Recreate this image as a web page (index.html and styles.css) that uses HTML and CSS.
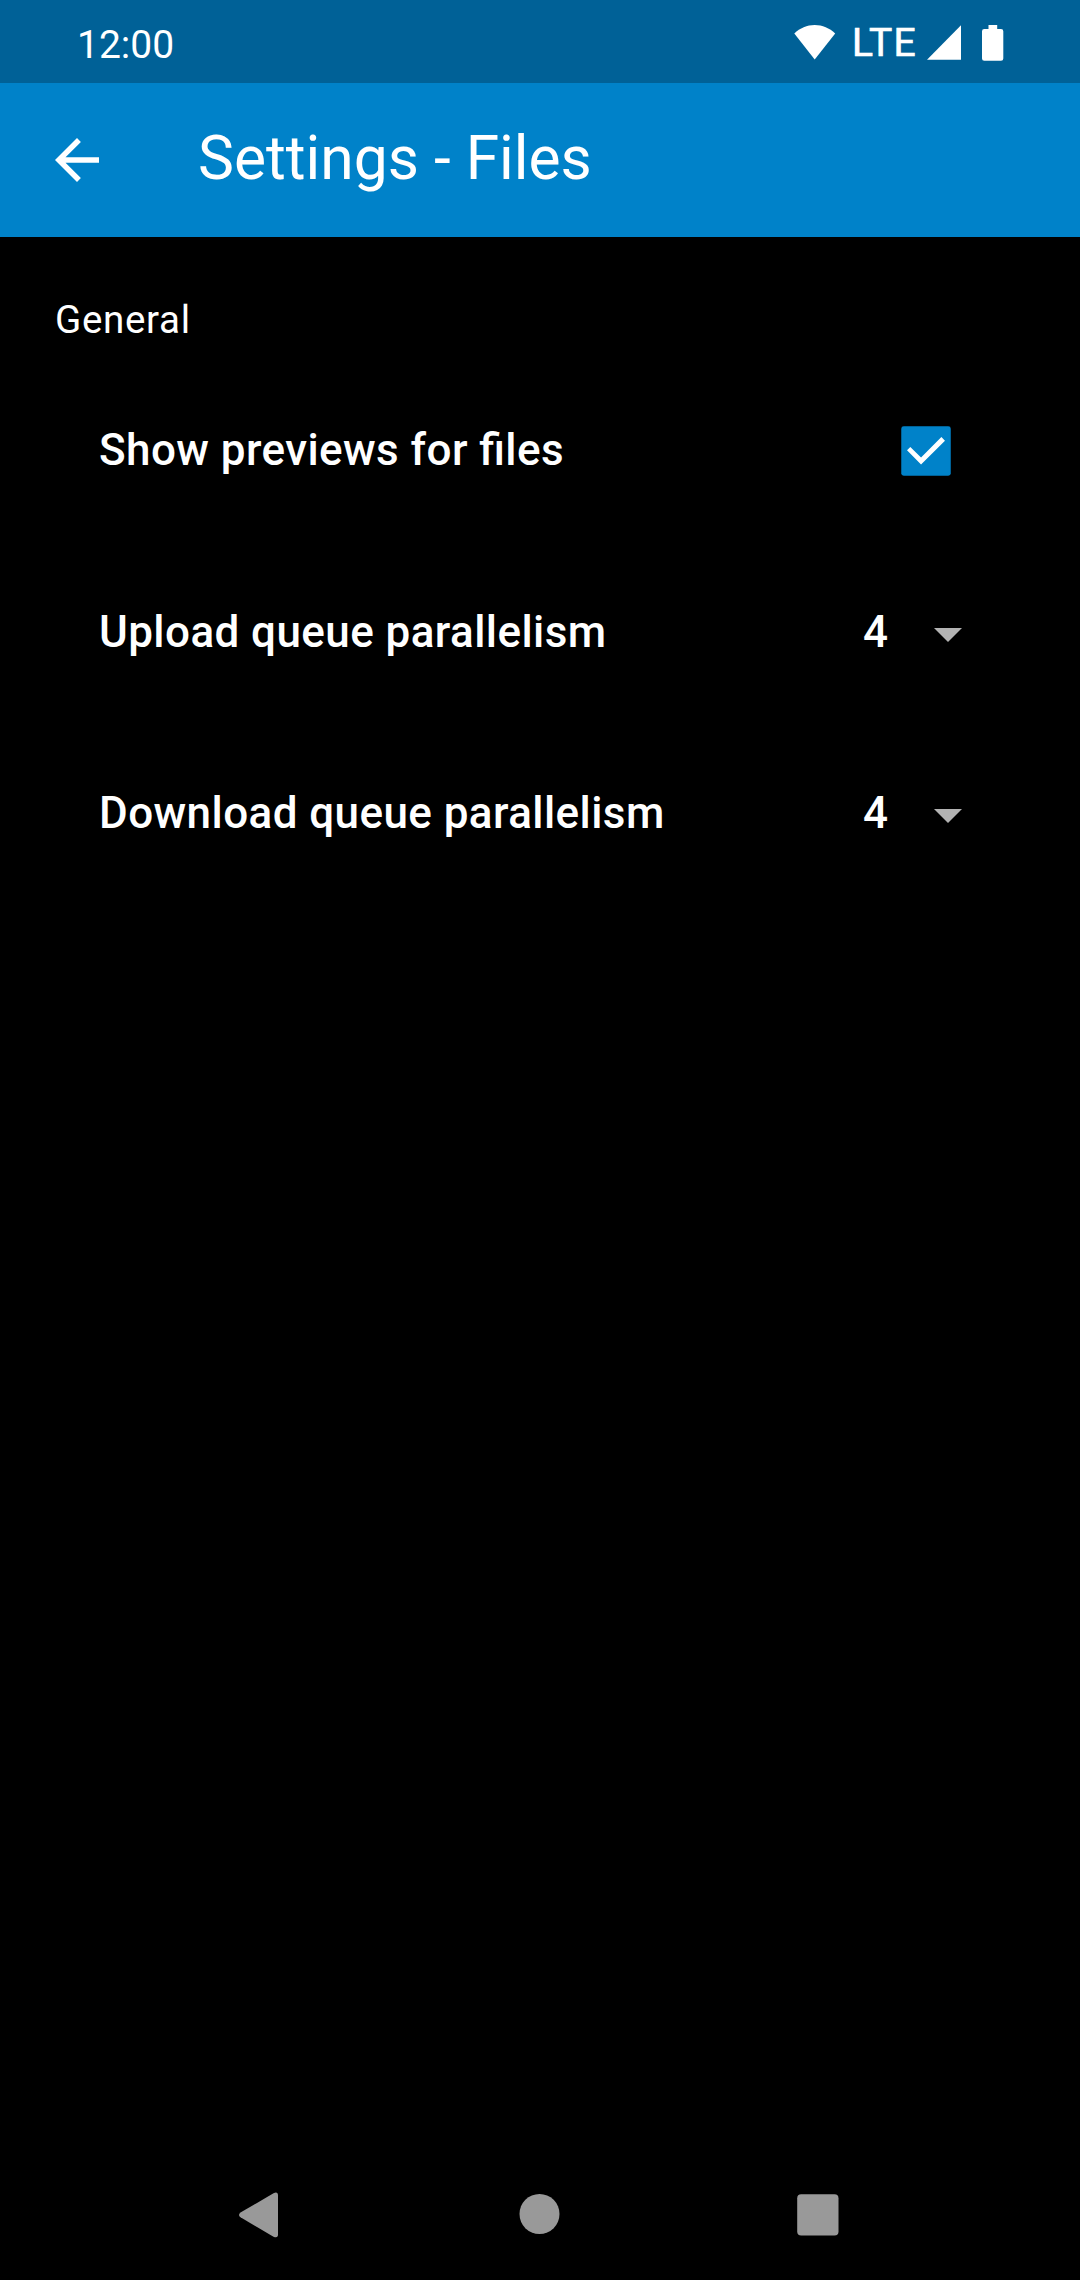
FILE: index.html
```html
<!DOCTYPE html>
<html lang="en">
<head>
<meta charset="utf-8">
<title>Settings - Files</title>
<link rel="stylesheet" href="styles.css">
</head>
<body>
<div class="screen">
  <header class="status">
    <span class="clock">12:00</span>
    <div class="indicators">
      <svg class="wifi" width="42" height="36" viewBox="0 0 42 36"><path d="M0.3 9.5C6 4 13 1 20.7 1S35.500 4 41.200 9.500L20.700 35.500z"/></svg>
      <span class="network">LTE</span>
      <svg class="signal" width="35" height="36" viewBox="0 0 35 36"><path d="M0 35.700L34 1.300V35.700z"/></svg>
      <svg class="battery" width="22" height="36" viewBox="0 0 22 36"><path d="M6.500 0h8.700v4H19a2.300 2.300 0 0 1 2.300 2.300v27.200a2.300 2.300 0 0 1-2.300 2.300H2.300A2.300 2.300 0 0 1 0 33.500V6.300A2.300 2.300 0 0 1 2.300 4h4.200z"/></svg>
    </div>
  </header>
  <div class="toolbar">
    <svg width="66" height="66" viewBox="0 0 24 24"><path d="M20 11H7.830l5.590-5.590L12 4l-8 8 8 8 1.410-1.410L7.830 13H20v-2z"/></svg>
    <h1 class="title">Settings - Files</h1>
  </div>
  <main class="content">
    <h2 class="section">General</h2>
    <div class="row">
      <span class="label">Show previews for files</span>
      <svg class="checkbox" width="66" height="66" viewBox="0 0 24 24"><rect class="box" x="3" y="3" width="18" height="18" rx=".9"/><path d="M6.300 10.500L5.100 11.750L10.200 16.900L18.900 8.250L17.600 6.900L10.200 14.350z"/></svg>
    </div>
    <div class="row">
      <span class="label">Upload queue parallelism</span>
      <span class="value">4</span>
      <svg class="caret" width="28" height="14" viewBox="0 0 28 14"><path d="M0 0h28L14 14z"/></svg>
    </div>
    <div class="row">
      <span class="label">Download queue parallelism</span>
      <span class="value">4</span>
      <svg class="caret" width="28" height="14" viewBox="0 0 28 14"><path d="M0 0h28L14 14z"/></svg>
    </div>
  </main>
  <nav class="navigation">
    <svg width="46" height="46" viewBox="0 0 46 46"><path d="M4.500 20.600L37.500 1.200Q42 -.8 42 3.500V42.500Q42 46.500 37.500 44.700L4.500 25.300Q1.500 23 4.500 20.600z"/></svg>
    <svg width="46" height="46" viewBox="0 0 46 46"><circle cx="23.500" cy="22" r="20"/></svg>
    <svg width="46" height="46" viewBox="0 0 46 46"><rect x="2.200" y="2.200" width="41.300" height="41.300" rx="4"/></svg>
  </nav>
</div>
</body>
</html>
```
FILE: styles.css
```css
* { box-sizing: border-box; }
body { margin: 0; background: #000; color: #fff; font-family: Roboto, sans-serif; }
svg { display: block; flex: none; fill: #fff; }
h1, h2 { margin: 0; font-weight: 400; }
.screen { display: flex; flex-direction: column; width: 1080px; height: 2280px; }
.status { display: flex; justify-content: space-between; height: 83px; padding: 0 76px 0 77px; background: #006197; }
.clock { padding-top: 22px; font-size: 39px; line-height: 46px; }
.indicators { display: flex; align-items: flex-start; padding-top: 25px; }
.wifi, .signal { margin-top: -1px; }
.network { margin-left: 16px; width: 75px; margin-top: -5px; font-size: 39px; line-height: 46px; letter-spacing: 1.2px; -webkit-text-stroke: .7px #fff; }
.battery { margin-left: 20px; }
.toolbar { display: flex; align-items: center; height: 154px; padding: 0 44px; background: #0082c9; }
.title { margin-left: 88px; padding-bottom: 2px; font-size: 60.5px; line-height: 72px; }
.content { flex: 1; padding: 60px 0 0; }
.section { margin-left: 55px; height: 64px; font-size: 38.5px; line-height: 46px; letter-spacing: .7px; }
.row { display: flex; align-items: center; height: 181.5px; padding: 0 118px 0 99px; font-size: 44px; line-height: 52px; font-weight: 500; }
.label { flex: 1; padding-bottom: 3px; letter-spacing: .42px; font-feature-settings: "liga" 1; }
.checkbox { margin: -1px 3px 0 0; }
.checkbox .box { fill: #0082c9; }
.value { margin-right: 46px; padding-bottom: 3px; }
.caret { fill: #b3b3b3; margin-top: 3px; }
.navigation { display: flex; justify-content: space-between; height: 132px; padding: 44px 239px 0 236px; }
.navigation svg { fill: #999; }
```
